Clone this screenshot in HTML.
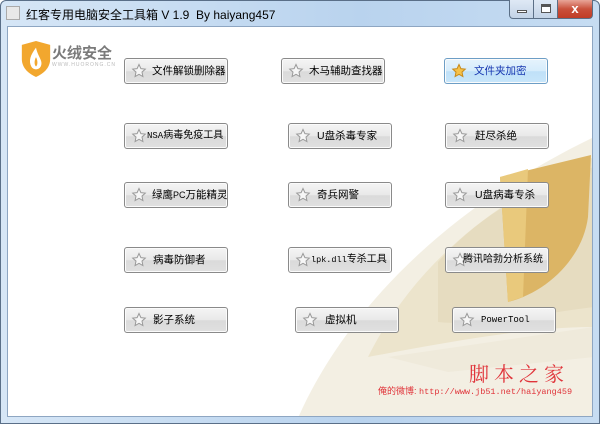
<!DOCTYPE html>
<html><head><meta charset="utf-8"><style>
*{margin:0;padding:0;box-sizing:border-box}
body{width:600px;height:424px;overflow:hidden;background:#fff;font-family:"Liberation Sans","Noto Sans CJK SC",sans-serif;position:relative}
.frame{position:absolute;left:0;top:0;width:600px;height:424px;background:linear-gradient(90deg,#d6e6f6,#b9d3ee 60%,#c6dcf2);border:1px solid #5a6f88;border-radius:6px 6px 0 0}
.title{position:absolute;left:26px;top:6px;font-size:12px;color:#000}
.client{position:absolute;left:7px;top:26px;width:586px;height:391px;background:#fff;border:1px solid #8ea6c2;overflow:hidden}
.btn{position:absolute;height:26px;width:104px;border:1px solid #8a8a8a;border-radius:3px;background:linear-gradient(#f4f4f4,#e9e9e9 50%,#dadada 52%,#e0e0e0);font-size:10.5px;color:#000;line-height:24px;white-space:nowrap;box-shadow:inset 0 0 0 1px #fbfbfb}
.btn svg{position:absolute;left:6px;top:4px}
.btn span{position:absolute;left:27px;top:0}
.blue{background:linear-gradient(#e6f3fd,#d6ecfb 50%,#bfe0f8 52%,#c8e6fa);border-color:#6d9ec6;color:#1636b0}
.mono{font-family:"Liberation Mono","Noto Sans CJK SC",monospace;font-size:9px}
.ctl{position:absolute;top:0;height:19px;border:1px solid #5b6f86;border-top:none}
</style></head><body>
<div class="frame"></div>
<div style="position:absolute;left:6px;top:6px;width:14px;height:14px;background:#e8e8e8;border:1px solid #aaa"></div>
<div class="title">红客专用电脑安全工具箱 V 1.9&nbsp; By haiyang457</div>
<div class="ctl" style="left:509px;width:25px;background:linear-gradient(#dfe9f5,#c3d3e6);border-radius:0 0 0 4px"><div style="position:absolute;left:7px;top:10px;width:10px;height:3px;background:#fff;border:1px solid #555"></div></div>
<div class="ctl" style="left:533px;width:25px;background:linear-gradient(#dfe9f5,#c3d3e6)"><div style="position:absolute;left:7px;top:4px;width:10px;height:9px;border:1px solid #555;border-top:3px solid #555;background:#fff"></div></div>
<div class="ctl" style="left:557px;width:36px;background:linear-gradient(#e8a598,#c9503b 50%,#c13c26);border-radius:0 0 4px 0;color:#fff;font-weight:bold;font-size:13px;text-align:center;line-height:17px">x</div>
<div class="client">
<svg width="586" height="391" style="position:absolute;left:0;top:0">
<path d="M290 391 C330 300 420 190 586 110 L586 391 Z" fill="#f3efe3"/>
<path d="M360 330 C400 250 470 180 586 130 L586 300 C520 300 440 315 360 330Z" fill="#ece4cc"/>
<path d="M430 235 C470 190 520 160 586 140 L586 280 C540 285 480 300 430 295Z" fill="#e6dcc0"/>
<path d="M492 150 L583 128 L580 190 C575 230 540 265 500 275 Z" fill="#dcb565"/>
<path d="M492 150 L520 142 L515 270 L500 275 Z" fill="#e9c97c"/>
<path d="M380 330 L586 300 L586 330 L440 345 Z" fill="#efeadb"/>
</svg>
<svg width="34" height="38" viewBox="0 0 36 40" style="position:absolute;left:11px;top:13px">
<path d="M3 5 L18 1 L33 5 L33 20 C33 30 25 36 18 39 C11 36 3 30 3 20Z" fill="#f2a72e"/>
<path d="M18 8 C12 16 10 22 13 28 C15 32 21 32 23 28 C26 22 20 18 18 8Z" fill="#fff"/>
<path d="M18 18 C16 22 16 26 18 28 C20 26 20 22 18 18Z" fill="#f2a72e"/>
</svg>
<div style="position:absolute;left:44px;top:15px;font-size:15px;font-weight:bold;color:#7a7a7a">火绒安全</div>
<div style="position:absolute;left:44px;top:35px;font-size:5px;color:#bbb;letter-spacing:1px">WWW.HUORONG.CN</div>

<div class="btn" style="left:116px;top:31px"><svg width="16" height="16" viewBox="0 0 16 16"><path d="M8 1.5L9.9 5.6 14.3 6.1 11 9.1 11.9 13.5 8 11.3 4.1 13.5 5 9.1 1.7 6.1 6.1 5.6Z" fill="#f6f6f6" stroke="#9a9a9a"/></svg><span>文件解锁删除器</span></div>
<div class="btn" style="left:273px;top:31px"><svg width="16" height="16" viewBox="0 0 16 16"><path d="M8 1.5L9.9 5.6 14.3 6.1 11 9.1 11.9 13.5 8 11.3 4.1 13.5 5 9.1 1.7 6.1 6.1 5.6Z" fill="#f6f6f6" stroke="#9a9a9a"/></svg><span>木马辅助查找器</span></div>
<div class="btn blue" style="left:436px;top:31px"><svg width="16" height="16" viewBox="0 0 16 16"><path d="M8 1.5L9.9 5.6 14.3 6.1 11 9.1 11.9 13.5 8 11.3 4.1 13.5 5 9.1 1.7 6.1 6.1 5.6Z" fill="#f6c24a" stroke="#c88a1a"/></svg><span style="left:29px">文件夹加密</span></div>

<div class="btn" style="left:116px;top:96px"><svg width="16" height="16" viewBox="0 0 16 16"><path d="M8 1.5L9.9 5.6 14.3 6.1 11 9.1 11.9 13.5 8 11.3 4.1 13.5 5 9.1 1.7 6.1 6.1 5.6Z" fill="#f6f6f6" stroke="#9a9a9a"/></svg><span style="left:22px;font-size:10px"><span class="mono" style="position:static">NSA</span>病毒免疫工具</span></div>
<div class="btn" style="left:280px;top:96px"><svg width="16" height="16" viewBox="0 0 16 16"><path d="M8 1.5L9.9 5.6 14.3 6.1 11 9.1 11.9 13.5 8 11.3 4.1 13.5 5 9.1 1.7 6.1 6.1 5.6Z" fill="#f6f6f6" stroke="#9a9a9a"/></svg><span style="left:28px">U盘杀毒专家</span></div>
<div class="btn" style="left:437px;top:96px"><svg width="16" height="16" viewBox="0 0 16 16"><path d="M8 1.5L9.9 5.6 14.3 6.1 11 9.1 11.9 13.5 8 11.3 4.1 13.5 5 9.1 1.7 6.1 6.1 5.6Z" fill="#f6f6f6" stroke="#9a9a9a"/></svg><span style="left:29px">赶尽杀绝</span></div>

<div class="btn" style="left:116px;top:155px"><svg width="16" height="16" viewBox="0 0 16 16"><path d="M8 1.5L9.9 5.6 14.3 6.1 11 9.1 11.9 13.5 8 11.3 4.1 13.5 5 9.1 1.7 6.1 6.1 5.6Z" fill="#f6f6f6" stroke="#9a9a9a"/></svg><span>绿鹰<span style="position:static;font-size:9px">PC</span>万能精灵</span></div>
<div class="btn" style="left:280px;top:155px"><svg width="16" height="16" viewBox="0 0 16 16"><path d="M8 1.5L9.9 5.6 14.3 6.1 11 9.1 11.9 13.5 8 11.3 4.1 13.5 5 9.1 1.7 6.1 6.1 5.6Z" fill="#f6f6f6" stroke="#9a9a9a"/></svg><span style="left:28px">奇兵网警</span></div>
<div class="btn" style="left:437px;top:155px"><svg width="16" height="16" viewBox="0 0 16 16"><path d="M8 1.5L9.9 5.6 14.3 6.1 11 9.1 11.9 13.5 8 11.3 4.1 13.5 5 9.1 1.7 6.1 6.1 5.6Z" fill="#f6f6f6" stroke="#9a9a9a"/></svg><span style="left:29px">U盘病毒专杀</span></div>

<div class="btn" style="left:116px;top:220px"><svg width="16" height="16" viewBox="0 0 16 16"><path d="M8 1.5L9.9 5.6 14.3 6.1 11 9.1 11.9 13.5 8 11.3 4.1 13.5 5 9.1 1.7 6.1 6.1 5.6Z" fill="#f6f6f6" stroke="#9a9a9a"/></svg><span style="left:28px">病毒防御者</span></div>
<div class="btn" style="left:280px;top:220px"><svg width="16" height="16" viewBox="0 0 16 16"><path d="M8 1.5L9.9 5.6 14.3 6.1 11 9.1 11.9 13.5 8 11.3 4.1 13.5 5 9.1 1.7 6.1 6.1 5.6Z" fill="#f6f6f6" stroke="#9a9a9a"/></svg><span style="left:22px;font-size:10px"><span class="mono" style="position:static;font-size:8.5px">lpk.dll</span>专杀工具</span></div>
<div class="btn" style="left:437px;top:220px"><svg width="16" height="16" viewBox="0 0 16 16"><path d="M8 1.5L9.9 5.6 14.3 6.1 11 9.1 11.9 13.5 8 11.3 4.1 13.5 5 9.1 1.7 6.1 6.1 5.6Z" fill="#f6f6f6" stroke="#9a9a9a"/></svg><span style="left:17px;font-size:10px">腾讯哈勃分析系统</span></div>

<div class="btn" style="left:116px;top:280px"><svg width="16" height="16" viewBox="0 0 16 16"><path d="M8 1.5L9.9 5.6 14.3 6.1 11 9.1 11.9 13.5 8 11.3 4.1 13.5 5 9.1 1.7 6.1 6.1 5.6Z" fill="#f6f6f6" stroke="#9a9a9a"/></svg><span style="left:28px">影子系统</span></div>
<div class="btn" style="left:287px;top:280px"><svg width="16" height="16" viewBox="0 0 16 16"><path d="M8 1.5L9.9 5.6 14.3 6.1 11 9.1 11.9 13.5 8 11.3 4.1 13.5 5 9.1 1.7 6.1 6.1 5.6Z" fill="#f6f6f6" stroke="#9a9a9a"/></svg><span style="left:29px">虚拟机</span></div>
<div class="btn" style="left:444px;top:280px"><svg width="16" height="16" viewBox="0 0 16 16"><path d="M8 1.5L9.9 5.6 14.3 6.1 11 9.1 11.9 13.5 8 11.3 4.1 13.5 5 9.1 1.7 6.1 6.1 5.6Z" fill="#f6f6f6" stroke="#9a9a9a"/></svg><span class="mono" style="left:28px;font-size:9px">PowerTool</span></div>

<div style="position:absolute;left:461px;top:331px;font-family:'Noto Serif CJK SC',serif;font-size:20px;color:#e0343a;letter-spacing:5px">脚本之家</div>
<div style="position:absolute;left:370px;top:357px;font-size:9px;color:#e0343a;white-space:nowrap">俺的微博: <span style="font-family:'Liberation Mono',monospace;font-size:8.5px">http://www.jb51.net/haiyang459</span></div>
</div>
</body></html>
